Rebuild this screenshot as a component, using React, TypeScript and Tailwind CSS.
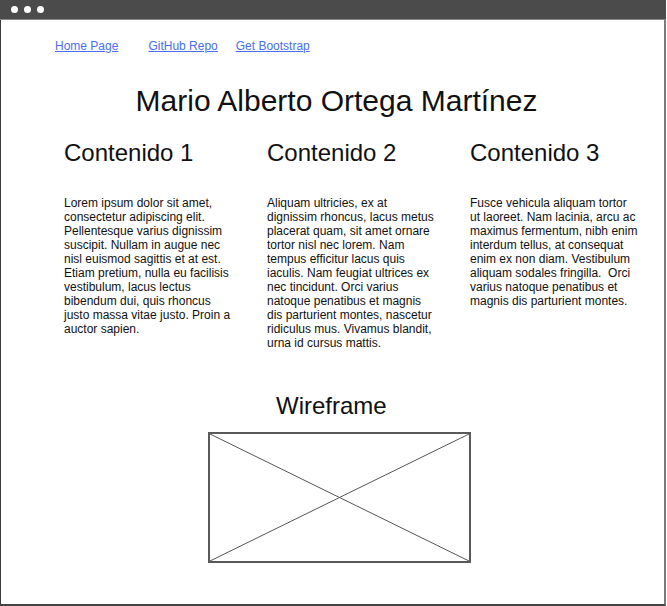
import React from "react";

const col1 =
  "Lorem ipsum dolor sit amet, consectetur adipiscing elit. Pellentesque varius dignissim suscipit. Nullam in augue nec nisl euismod sagittis et at est. Etiam pretium, nulla eu facilisis vestibulum, lacus lectus bibendum dui, quis rhoncus justo massa vitae justo. Proin a auctor sapien.";
const col2 =
  "Aliquam ultricies, ex at dignissim rhoncus, lacus metus placerat quam, sit amet ornare tortor nisl nec lorem. Nam tempus efficitur lacus quis iaculis. Nam feugiat ultrices ex nec tincidunt. Orci varius natoque penatibus et magnis dis parturient montes, nascetur ridiculus mus. Vivamus blandit, urna id cursus mattis.";
const col3 =
  "Fusce vehicula aliquam tortor ut laoreet. Nam lacinia, arcu ac maximus fermentum, nibh enim interdum tellus, at consequat enim ex non diam. Vestibulum aliquam sodales fringilla.\u00a0 Orci varius natoque penatibus et magnis dis parturient montes.";

function Column({ title, text }: { title: string; text: string }) {
  return (
    <div className="w-[168px] shrink-0">
      <h2 className="text-[24px] leading-[28px] text-[#111]">{title}</h2>
      <p className="mt-[29px] text-[12px] leading-[14px] text-[#111]">{text}</p>
    </div>
  );
}

export default function App() {
  return (
    <div className="w-[667px] h-[606px] bg-white font-['Liberation_Sans',Arial,sans-serif]">
      <div className="w-[666px] h-[606px] flex flex-col border-l border-r-2 border-b-2 border-l-[#3a3a3a] border-r-[#7a7a7a] border-b-[#444]">
        <div className="h-[20px] shrink-0 bg-[#4b4b4b] border-b border-[#8a8a8a] flex items-center gap-[6px] pl-[11px] -ml-px -mr-[2px]">
          <span className="w-[7px] h-[7px] rounded-full bg-white" />
          <span className="w-[7px] h-[7px] rounded-full bg-white" />
          <span className="w-[7px] h-[7px] rounded-full bg-white" />
        </div>

        <nav className="mt-[19px] pl-[54px] flex text-[12px] leading-[14px]">
          <a href="#" className="text-[#4a6ef2] underline">Home Page</a>
          <a href="#" className="ml-[30px] text-[#4a6ef2] underline">GitHub Repo</a>
          <a href="#" className="ml-[18px] text-[#4a6ef2] underline">Get Bootstrap</a>
        </nav>

        <h1 className="mt-[31px] pl-[8px] text-center text-[30px] leading-[34px] text-[#111]">
          Mario Alberto Ortega Martínez
        </h1>

        <div className="mt-[21px] pl-[63px] flex gap-[35px]">
          <Column title="Contenido 1" text={col1} />
          <Column title="Contenido 2" text={col2} />
          <Column title="Contenido 3" text={col3} />
        </div>

        <div className="mt-[42px] pl-[207px] flex flex-col items-start">
          <h2 className="ml-[68px] text-[24px] leading-[28px] text-[#111]">Wireframe</h2>
          <div className="mt-[12px] w-[263px] h-[131px] border-2 border-[#5a5a5a]">
            <svg width="259" height="127" viewBox="0 0 259 127" className="block">
              <line x1="0" y1="0" x2="259" y2="127" stroke="#555" strokeWidth="1" />
              <line x1="0" y1="127" x2="259" y2="0" stroke="#555" strokeWidth="1" />
            </svg>
          </div>
        </div>
      </div>
    </div>
  );
}
